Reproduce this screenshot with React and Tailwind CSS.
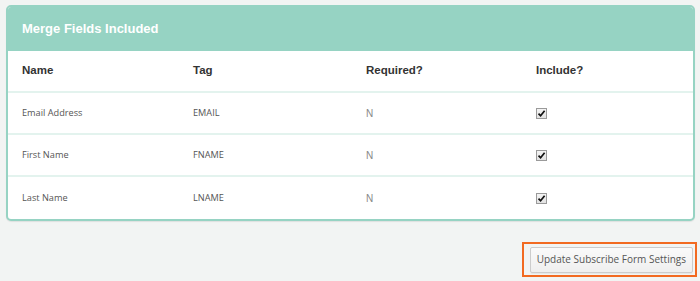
import React from "react";

const rows = [
  { name: "Email Address", tag: "EMAIL", required: "N" },
  { name: "First Name", tag: "FNAME", required: "N" },
  { name: "Last Name", tag: "LNAME", required: "N" },
];

function Check() {
  return (
    <span className="flex h-[11px] w-[11px] items-center justify-center border border-[#9a9a9a] bg-gradient-to-b from-[#f4f4f4] to-[#e2e2e2]">
      <svg width="9" height="9" viewBox="0 0 9 9">
        <path d="M1.5 4.6 L3.6 6.8 L7.6 1.8" fill="none" stroke="#111" strokeWidth="1.7" />
      </svg>
    </span>
  );
}

export default function App() {
  return (
    <div className="min-h-[281px] w-[700px] bg-[#f2f4f3] pt-[5px] pl-[6px] pr-[5px] font-['Open_Sans',sans-serif]">
      <div className="overflow-hidden rounded-[5px] border-2 border-[#96d3c3] bg-white shadow-[0_1px_1px_rgba(0,0,0,0.08)]">
        <div className="flex h-[44px] items-center bg-[#96d3c3] px-[14px]">
          <span className="font-['Liberation_Sans',sans-serif] text-[13px] font-bold text-white">
            Merge Fields Included
          </span>
        </div>
        <div className="grid h-[42px] grid-cols-[171px_173px_170px_1fr] items-center border-b-2 border-[#e3f3ee] px-[14px] font-['Liberation_Sans',sans-serif] text-[11.5px] font-bold text-[#333]">
          <div>Name</div>
          <div>Tag</div>
          <div>Required?</div>
          <div>Include?</div>
        </div>
        {rows.map((r, i) => (
          <div
            key={r.tag}
            className={
              "grid h-[42px] grid-cols-[171px_173px_170px_1fr] items-center px-[14px] text-[9.2px] text-[#555] " +
              (i < rows.length - 1 ? "border-b-2 border-[#e3f3ee]" : "")
            }
          >
            <div>{r.name}</div>
            <div>{r.tag}</div>
            <div className="font-['Liberation_Sans',sans-serif] text-[10px] text-[#888]">{r.required}</div>
            <div>
              <Check />
            </div>
          </div>
        ))}
      </div>
      <div className="mt-[21px] -mr-[2px] flex justify-end">
        <div className="border-2 border-[#f26a21] pt-[1px] pb-[2px] pl-[6px] pr-[2px]">
          <button className="h-[26px] rounded-[2px] border border-[#ccc] bg-gradient-to-b from-[#fafafa] to-[#efefef] px-[6px] text-[10px] text-[#555] shadow-[0_1px_0_rgba(0,0,0,0.05)]">
            Update Subscribe Form Settings
          </button>
        </div>
      </div>
    </div>
  );
}
